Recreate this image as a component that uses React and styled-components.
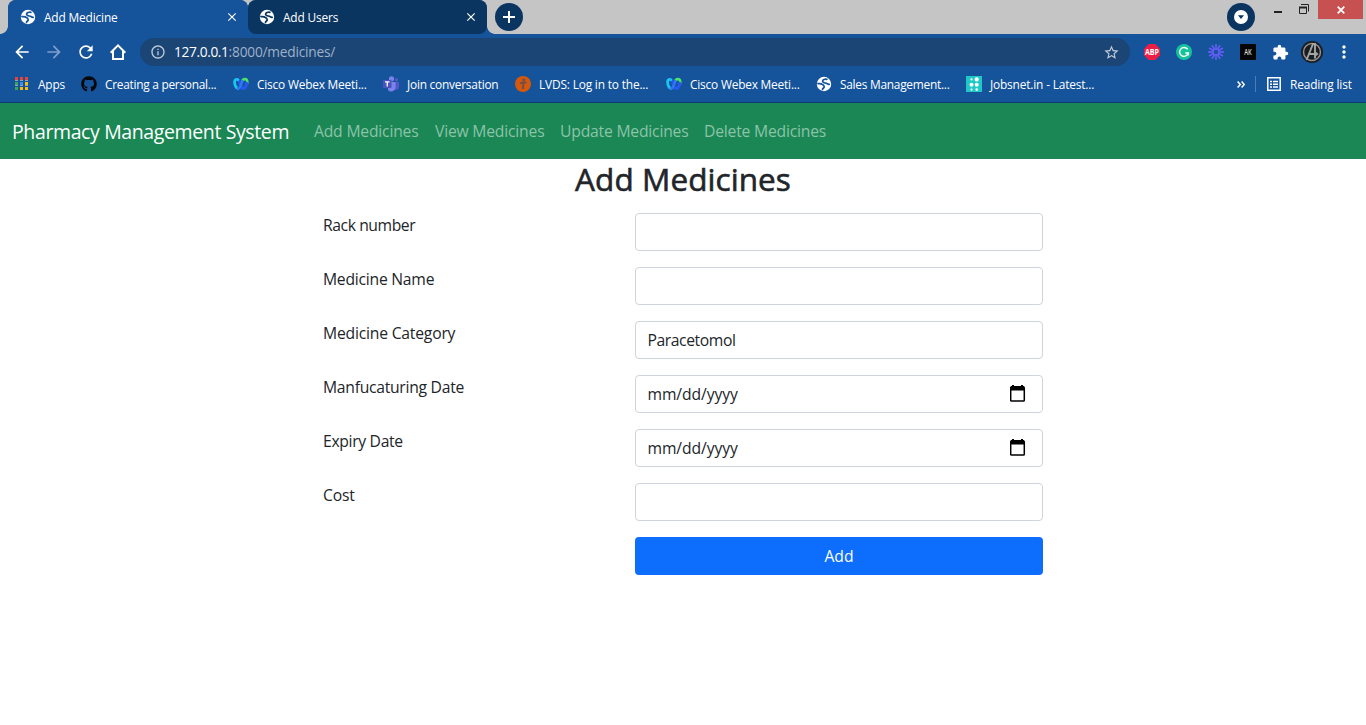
import React from 'react';
import styled, { createGlobalStyle } from 'styled-components';
import {
  MdArrowBack,
  MdArrowForward,
  MdRefresh,
  MdInfoOutline,
  MdStarBorder,
  MdExtension,
  MdMoreVert,
  MdClose,
} from 'react-icons/md';
import { FaGithub } from 'react-icons/fa';

const GlobalStyle = createGlobalStyle`
  *, *::before, *::after { box-sizing: border-box; }
  body {
    margin: 0;
    background: #fff;
    color: #212529;
    font-family: "Open Sans", "Noto Sans", sans-serif;
    font-size: 15.7px;
    line-height: 24px;
    letter-spacing: -0.2px;
    overflow: hidden;
  }
  svg { display: block; flex: none; }
`;

/* ---------- Browser window ---------- */

const Browser = styled.header`
  height: 103px;
  background: #15539a;
  border-bottom: 1px solid #0d3a70;
  color: #fff;
  font-size: 11.9px;
  line-height: 16px;
  letter-spacing: -0.16px;
`;

const TabStrip = styled.div`
  display: flex;
  height: 34px;
  padding-left: 8px;
  background: #c5c5c5;
`;

const TabSlot = styled.div`
  position: relative;
  width: ${(p) => p.$width}px;
  height: 34px;
  background: #15539a;
  border-radius: 8px 8px 0 0;

  &::after {
    content: '';
    position: absolute;
    bottom: 0;
    width: 8px;
    height: 8px;
    ${(p) =>
      p.$flare === 'left'
        ? 'left: -8px; background: radial-gradient(circle at 0 0, transparent 7.5px, #15539a 8.2px);'
        : 'right: -8px; background: radial-gradient(circle at 100% 0, transparent 7.5px, #15539a 8.2px);'}
  }
`;

const Tab = styled.div`
  display: flex;
  align-items: center;
  height: 34px;
  padding: 0 9px 0 ${(p) => (p.$active ? 12 : 11)}px;
  border-radius: 8px;
  background: ${(p) => (p.$active ? '#15539a' : '#0b3561')};
`;

const TabTitle = styled.span`
  flex: 1;
  margin-left: 8px;
  white-space: nowrap;
`;

const RoundButton = styled.div`
  display: flex;
  align-items: center;
  justify-content: center;
  width: 28px;
  height: 28px;
  margin: 3px 0 0 ${(p) => p.$left};
  border-radius: 50%;
  background: #0b3561;
`;

const WindowControls = styled.div`
  display: flex;
  margin: 0 3px 0 13px;
`;

const CloseWindow = styled.div`
  display: flex;
  align-items: center;
  justify-content: center;
  width: 45px;
  height: 19px;
  margin-left: 6px;
  background: #c75050;
`;

const Toolbar = styled.div`
  display: flex;
  align-items: center;
  height: 36px;
  padding: 0 0 0 12px;
`;

const NavButton = styled.div`
  display: flex;
  flex: none;
  justify-content: center;
  width: 20px;
  margin-right: 12px;
  color: ${(p) => (p.$dim ? '#7e9fcb' : '#fff')};
`;

const Omnibox = styled.div`
  display: flex;
  flex: none;
  align-items: center;
  width: 990px;
  height: 28px;
  padding: 0 10px;
  border-radius: 14px;
  background: #1b4575;
  color: #c0cbd8;
`;

const Url = styled.span`
  flex: 1;
  margin-left: 8px;
  color: #9fb2ca;
  font-size: 13.7px;
  letter-spacing: -0.2px;
`;

const Host = styled.span`
  color: #fff;
  letter-spacing: -0.35px;
`;

const Extensions = styled.div`
  display: flex;
  align-items: center;
  margin-left: 11px;
`;

const ExtensionSlot = styled.div`
  display: flex;
  justify-content: center;
  width: 22px;
  margin-right: 10px;

  &:last-child { margin-right: 0; }
`;

const BookmarkBar = styled.div`
  display: flex;
  align-items: center;
  height: 32px;
  padding: 0 14px;
  margin-top: -2px;
`;

const Bookmark = styled.div`
  display: flex;
  flex: none;
  align-items: center;
  gap: 8px;
  width: ${(p) => p.$width}px;
  letter-spacing: ${(p) => p.$track || -0.17}px;
  white-space: nowrap;
`;

const BookmarkEnd = styled.div`
  display: flex;
  align-items: center;
  margin-left: auto;
`;

const Divider = styled.div`
  width: 1px;
  height: 16px;
  margin: 0 11px 0 10px;
  background: #4b7db8;
`;

const ReadingList = styled.span`
  width: 62px;
  margin-left: 9px;
  white-space: nowrap;
`;

/* ---------- Page ---------- */

const Navbar = styled.nav`
  display: flex;
  align-items: center;
  height: 56px;
  padding: 0 12px;
  background: #1a8754;
`;

const Brand = styled.span`
  width: 302px;
  padding-top: 1px;
  color: #fff;
  font-size: 19.5px;
  letter-spacing: -0.38px;
  white-space: nowrap;
`;

const NavLink = styled.span`
  width: ${(p) => p.$width}px;
  color: #8cc3a9;
  white-space: nowrap;
`;

const Title = styled.h1`
  height: 38px;
  margin: 0 0 16px;
  font-size: 31.5px;
  font-weight: 500;
  line-height: 40px;
  letter-spacing: 0.07px;
  text-align: center;
  -webkit-text-stroke: 0.6px #212529;
`;

const Form = styled.form`
  display: flex;
  flex-direction: column;
  gap: 16px;
  width: 720px;
  margin: 0 auto;
`;

const Row = styled.div`
  display: grid;
  grid-template-columns: 312px 408px;
  height: 38px;
`;

const Label = styled.label`
  letter-spacing: ${(p) => p.$track || -0.2}px;
`;

const Field = styled.div`
  display: flex;
  align-items: center;
  justify-content: space-between;
  padding: 0 16px 0 11.5px;
  border: 1px solid #ced4da;
  border-radius: 4px;
  letter-spacing: ${(p) => p.$track || -0.2}px;
`;

const SubmitButton = styled.button`
  grid-column: 2;
  padding: 0;
  border: 0;
  border-radius: 4px;
  background: #0d6efd;
  color: #fff;
  font: inherit;
`;

/* ---------- Icons ---------- */

const Globe = ({ ink = '#15539a' }) => (
  <svg width="16" height="16" viewBox="0 0 16 16">
    <circle cx="8" cy="8" r="7.2" fill="#fff" />
    <path
      d="M10.900 3.300C8.800 2.900 6.500 3.700 6.600 5.300c.1 1.800 2.800 1.500 4 2 .8.400 1.200 1.100 2.600 1M2 7.700c1.800-.2 3.700.1 4.900 1.100 1.200.9 1.900 2.200.6 3.200-.6.500-1 .9-1 1.500"
      fill="none"
      stroke={ink}
      strokeWidth="1.7"
      strokeLinecap="round"
      strokeLinejoin="round"
    />
  </svg>
);

const HomeIcon = () => (
  <svg width="18" height="18" viewBox="0 0 18 18" fill="none" stroke="#fff" strokeWidth="2">
    <path d="M1.700 9.700 9 2.400l7.300 7.300" />
    <path d="M4 8v8h10V8" />
  </svg>
);

const CrossIcon = () => (
  <svg width="8" height="8" viewBox="0 0 9 9" stroke="#fff" strokeWidth="2">
    <path d="M.8.8l7.400 7.400M8.200.8.8 8.200" />
  </svg>
);

const PlusIcon = () => (
  <svg width="12" height="12" viewBox="0 0 12 12" stroke="#fff" strokeWidth="2">
    <path d="M6 0v12M0 6h12" />
  </svg>
);

const TabSearchIcon = () => (
  <svg width="14" height="14" viewBox="0 0 14 14">
    <circle cx="7" cy="7" r="7" fill="#fff" />
    <path d="M4 5.300h6L7 9z" fill="#0b3561" />
  </svg>
);

const MinimizeRestoreIcon = () => (
  <svg width="44" height="19" viewBox="0 0 44 19" fill="none">
    <path d="M6 12h8" stroke="#222" strokeWidth="2" />
    <path d="M31.500 7.500h7v6h-7z" stroke="#222" />
    <path d="M31 7.500h8" stroke="#222" strokeWidth="2" />
    <path d="M33 4.500h7.500v7" stroke="#222" />
  </svg>
);

const AbpIcon = () => (
  <svg width="16" height="16" viewBox="0 0 16 16">
    <path d="M4.700 0h6.600L16 4.700v6.600L11.300 16H4.700L0 11.300V4.700z" fill="#ed1e45" />
    <text x="8" y="10.900" fill="#fff" fontSize="8.200" fontWeight="700" letterSpacing="0" textAnchor="middle" textLength="14" lengthAdjust="spacingAndGlyphs">ABP</text>
  </svg>
);

const GrammarlyIcon = () => (
  <svg width="16" height="16" viewBox="0 0 16 16">
    <circle cx="8" cy="8" r="8" fill="#15c39a" />
    <path d="M11.600 5.400A4.400 4.400 0 1 0 12.300 9H9.300M12.300 8.600v3" fill="none" stroke="#fff" strokeWidth="1.400" />
  </svg>
);

const BurstIcon = () => (
  <svg width="16" height="16" viewBox="0 0 16 16" stroke="#625df5" strokeWidth="1.700">
    {[0, 30, 60, 90, 120, 150, 180, 210, 240, 270, 300, 330].map((a) => (
      <path key={a} d="M8 0v5.400" transform={`rotate(${a} 8 8)`} />
    ))}
    <circle cx="8" cy="8" r="2.900" fill="none" strokeWidth="1.200" />
  </svg>
);

const AkIcon = () => (
  <svg width="16" height="16" viewBox="0 0 16 16">
    <path d="M0 0h16v16H0z" fill="#050505" />
    <text x="8" y="11" fill="#ddd" fontSize="8.500" fontWeight="600" letterSpacing="0" textAnchor="middle" textLength="7.500" lengthAdjust="spacingAndGlyphs">AK</text>
  </svg>
);

const AvatarIcon = () => (
  <svg width="22" height="22" viewBox="0 0 22 22" fill="none">
    <circle cx="11" cy="11" r="11" fill="#1b1c1e" />
    <circle cx="11" cy="11" r="8.500" stroke="#8f9193" strokeWidth="1.500" />
    <path d="M5.500 19 12 3h2v14.500M8.500 13h7" stroke="#a3a5a7" strokeWidth="1.900" />
    <path d="M15 10.800 17.500 13 15 15.200z" fill="#a3a5a7" />
  </svg>
);

const APP_COLORS = ['#ea4335', '#ea4335', '#ea4335', '#34a853', '#4285f4', '#fbbc05', '#34a853', '#fbbc05', '#fbbc05'];

const AppsIcon = () => (
  <svg width="16" height="16" viewBox="0 0 16 16">
    {APP_COLORS.map((c, i) => (
      <g key={i}>
        <rect x={1 + (i % 3) * 5} y={1 + Math.floor(i / 3) * 5} width="3" height="3" fill={c} />
        {i < 6 && <rect x={1 + (i % 3) * 5} y={4 + Math.floor(i / 3) * 5} width="3" height="1" fill="#8fa5bd" />}
      </g>
    ))}
  </svg>
);

const WebexIcon = () => (
  <svg width="16" height="16" viewBox="0 0 16 16" fill="none" strokeLinecap="round">
    <path d="M9.600 4.200c.8-1.300 3.200-1.500 4.200-.3.800 1.200.5 2.700.2 4" stroke="#4be36b" strokeWidth="2.600" />
    <path d="M13.800 7.500c-.8 3-2 5-3.600 5-1.800 0-2.400-1.700-3.100-4.600C6.600 5.500 6 3.600 4.200 3.500" stroke="#2458ee" strokeWidth="3.200" />
    <path d="M4.800 3.700C3.600 2.900 2 3.400 1.700 5c-.4 2.800.9 7.200 3.400 7.400" stroke="#16c7ee" strokeWidth="2.800" />
    <path d="M5 12.300c2.400.4 3-4.300 4.400-7.200" stroke="#2d78f2" strokeWidth="2.600" />
  </svg>
);

const TeamsIcon = () => (
  <svg width="16" height="16" viewBox="0 0 16 16">
    <circle cx="8.500" cy="2.800" r="2.600" fill="#7b83eb" />
    <circle cx="13.500" cy="3.700" r="1.700" fill="#5059c9" />
    <path d="M11 6h5v5a3 3 0 0 1-5 2.200z" fill="#5059c9" />
    <path d="M5 6h7.500v5.500a4.200 4.200 0 0 1-7.500 2.400z" fill="#7b83eb" />
    <rect x="0" y="4" width="8.500" height="8" rx=".7" fill="#4b53bc" />
    <path d="M2 5.900h4.500M4.250 6v4.500" stroke="#fff" strokeWidth="1.300" />
  </svg>
);

const LvdsIcon = () => (
  <svg width="16" height="16" viewBox="0 0 16 16">
    <circle cx="8" cy="8" r="8" fill="#d6580b" />
    <circle cx="8.800" cy="3.900" r="1.400" fill="#6f4f4c" />
    <path d="M5 7.300 8 6.600h3.300M8.600 7 7.800 13.200" fill="none" stroke="#6f4f4c" strokeWidth="2" />
  </svg>
);

const JobsIcon = () => (
  <svg width="16" height="16" viewBox="0 0 16 16">
    <path d="M0 0h16v16H0z" fill="#20c9c7" />
    <g fill="#fff">
      <circle cx="5.500" cy="3.400" r="1.100" />
      <circle cx="10.700" cy="3.400" r="2.100" />
      <circle cx="5.500" cy="8.700" r="2" />
      <circle cx="10.700" cy="8.700" r="2" />
      <circle cx="5.500" cy="13.600" r="1.100" />
      <circle cx="10.700" cy="13.600" r="1.300" />
    </g>
  </svg>
);

const ChevronsIcon = () => (
  <svg width="8" height="7" viewBox="0 0 8 7" fill="none" stroke="#fff" strokeWidth="1.500">
    <path d="M.6.6 3.300 3.500.6 6.400M4.600.6l2.700 2.900-2.700 2.900" />
  </svg>
);

const ListIcon = () => (
  <svg width="14" height="14" viewBox="0 0 14 14" fill="none" stroke="#fff">
    <path d="M.8.8h12.400v12.400H.8z" strokeWidth="1.500" />
    <path d="M3 4.500h2M6 4.500h5M3 7.200h2M6 7.200h5M3 10h2M6 10h5" strokeWidth="1.400" />
  </svg>
);

const CalendarIcon = () => (
  <svg width="16" height="18" viewBox="0 0 16 18">
    <path d="M2 0h2v2H2zM11 0h2v2h-2zM1 1h13v4.500H1z" fill="#000" />
    <rect x=".7" y="2" width="13.600" height="14" rx=".8" fill="none" stroke="#000" strokeWidth="1.500" />
  </svg>
);

/* ---------- Data ---------- */

const BOOKMARKS = [
  { label: 'Apps', icon: <AppsIcon />, width: 67 },
  { label: 'Creating a personal...', icon: <FaGithub size={16} color="#05070b" />, width: 152, track: -0.27 },
  { label: 'Cisco Webex Meeti...', icon: <WebexIcon />, width: 150, track: -0.2 },
  { label: 'Join conversation', icon: <TeamsIcon />, width: 132, track: -0.23 },
  { label: 'LVDS: Log in to the...', icon: <LvdsIcon />, width: 151 },
  { label: 'Cisco Webex Meeti...', icon: <WebexIcon />, width: 150, track: -0.2 },
  { label: 'Sales Management...', icon: <Globe />, width: 150, track: -0.26 },
  { label: 'Jobsnet.in - Latest...', icon: <JobsIcon />, width: 130 },
];

const LINKS = [
  ['Add Medicines', 121],
  ['View Medicines', 125],
  ['Update Medicines', 144],
  ['Delete Medicines', 122],
];

const FIELDS = [
  { label: 'Rack number', track: -0.42 },
  { label: 'Medicine Name', track: -0.24 },
  { label: 'Medicine Category' },
  { label: 'Manfucaturing Date', date: true, track: -0.27 },
  { label: 'Expiry Date', date: true, track: -0.32 },
  { label: 'Cost' },
];

const DATE_HINT = 'mm/dd/yyyy';

export default function App() {
  return (
    <>
      <GlobalStyle />
      <Browser>
        <TabStrip>
          <TabSlot $width={240} $flare="left">
            <Tab $active>
              <Globe />
              <TabTitle>Add Medicine</TabTitle>
              <MdClose size={14} />
            </Tab>
          </TabSlot>
          <TabSlot $width={239} $flare="right">
            <Tab>
              <Globe ink="#0b3561" />
              <TabTitle>Add Users</TabTitle>
              <MdClose size={14} />
            </Tab>
          </TabSlot>
          <RoundButton $left="8px"><PlusIcon /></RoundButton>
          <RoundButton $left="auto"><TabSearchIcon /></RoundButton>
          <WindowControls>
            <MinimizeRestoreIcon />
            <CloseWindow><CrossIcon /></CloseWindow>
          </WindowControls>
        </TabStrip>
        <Toolbar>
          <NavButton><MdArrowBack size={20} /></NavButton>
          <NavButton $dim><MdArrowForward size={20} /></NavButton>
          <NavButton><MdRefresh size={20} /></NavButton>
          <NavButton><HomeIcon /></NavButton>
          <Omnibox>
            <MdInfoOutline size={16} />
            <Url><Host>127.0.0.1</Host>:8000/medicines/</Url>
            <MdStarBorder size={17} />
          </Omnibox>
          <Extensions>
            <ExtensionSlot><AbpIcon /></ExtensionSlot>
            <ExtensionSlot><GrammarlyIcon /></ExtensionSlot>
            <ExtensionSlot><BurstIcon /></ExtensionSlot>
            <ExtensionSlot><AkIcon /></ExtensionSlot>
            <ExtensionSlot><MdExtension size={17} /></ExtensionSlot>
            <ExtensionSlot><AvatarIcon /></ExtensionSlot>
            <ExtensionSlot><MdMoreVert size={20} /></ExtensionSlot>
          </Extensions>
        </Toolbar>
        <BookmarkBar>
          {BOOKMARKS.map((b, i) => (
            <Bookmark key={i} $width={b.width} $track={b.track}>
              {b.icon}
              <span>{b.label}</span>
            </Bookmark>
          ))}
          <BookmarkEnd>
            <ChevronsIcon />
            <Divider />
            <ListIcon />
            <ReadingList>Reading list</ReadingList>
          </BookmarkEnd>
        </BookmarkBar>
      </Browser>
      <Navbar>
        <Brand>Pharmacy Management System</Brand>
        {LINKS.map(([text, width]) => (
          <NavLink key={text} $width={width}>{text}</NavLink>
        ))}
      </Navbar>
      <Title>Add Medicines</Title>
      <Form>
        {FIELDS.map((f) => (
          <Row key={f.label}>
            <Label $track={f.track}>{f.label}</Label>
            {f.date ? (
              <Field $track={-0.1}>
                <span>{DATE_HINT}</span>
                <CalendarIcon />
              </Field>
            ) : (
              <Field $track={-0.42}>
                <span>{f.label === 'Medicine Category' ? 'Paracetomol' : ''}</span>
              </Field>
            )}
          </Row>
        ))}
        <Row>
          <SubmitButton type="button">Add</SubmitButton>
        </Row>
      </Form>
    </>
  );
}
